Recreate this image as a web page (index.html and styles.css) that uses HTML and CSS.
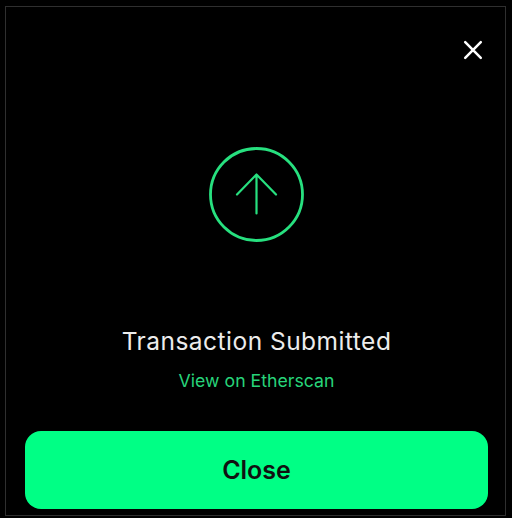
FILE: index.html
```html
<!DOCTYPE html>
<html lang="en">
<head>
    <meta charset="UTF-8">
    <title>Transaction Submitted</title>
    <link rel="stylesheet" href="styles.css">
</head>
<body>

    <div class="modal">
        <div class="modal-header">
            <button class="close-icon" aria-label="Close">
                <svg width="24" height="24" viewBox="0 0 24 24" fill="none" stroke="#ffffff" stroke-width="2.5" stroke-linecap="round">
                    <path d="M4.2 4.200L19.800 19.800M19.800 4.200L4.200 19.800"/>
                </svg>
            </button>
        </div>

        <div class="status-icon">
            <svg width="95" height="95" viewBox="0 0 95 95" fill="none" stroke="#27e07f" stroke-linecap="round" stroke-linejoin="round">
                <circle cx="47.500" cy="47.500" r="46" stroke-width="2.800"/>
                <path d="M47.500 66.500V27.500M28 47.500L47.500 27.500L67 47.500" stroke-width="2.200"/>
            </svg>
        </div>

        <h2 class="title">Transaction Submitted</h2>
        <a class="link" href="#">View on Etherscan</a>

        <button class="button">Close</button>
    </div>

</body>
</html>
```

FILE: styles.css
```css
html, body {
    height: 100%;
}
body {
    font-family: Inter, "Liberation Sans", sans-serif;
    background-color: #000;
    margin: 0;
    padding: 6px 6px 2px 5px;
    box-sizing: border-box;
    overflow: hidden;
}
.modal {
    height: 100%;
    box-sizing: border-box;
    border: 1px solid #2f2f2f;
    padding: 0 17px 6px 19px;
    display: flex;
    flex-direction: column;
    align-items: center;
}
.modal-header {
    width: 100%;
    box-sizing: border-box;
    display: flex;
    justify-content: flex-end;
    padding: 31px 3px 0 0;
}
.close-icon {
    width: 24px;
    height: 24px;
    padding: 0;
    border: none;
    background: none;
    cursor: pointer;
}
.status-icon {
    margin: 85px 1px 0 0;
    height: 95px;
}
.title {
    margin: 83px 0 0;
    font-size: 24.500px;
    line-height: 32px;
    font-weight: 400;
    letter-spacing: 0.48px;
    color: #ececec;
}
.link {
    margin-top: 14px;
    font-size: 17.700px;
    line-height: 20px;
    color: #27d47a;
    text-decoration: none;
}
.button {
    width: 100%;
    height: 78px;
    margin-top: auto;
    border: none;
    border-radius: 16px;
    background-color: #00ff85;
    color: #111111;
    font-family: inherit;
    font-size: 25px;
    font-weight: 600;
    cursor: pointer;
}
```
